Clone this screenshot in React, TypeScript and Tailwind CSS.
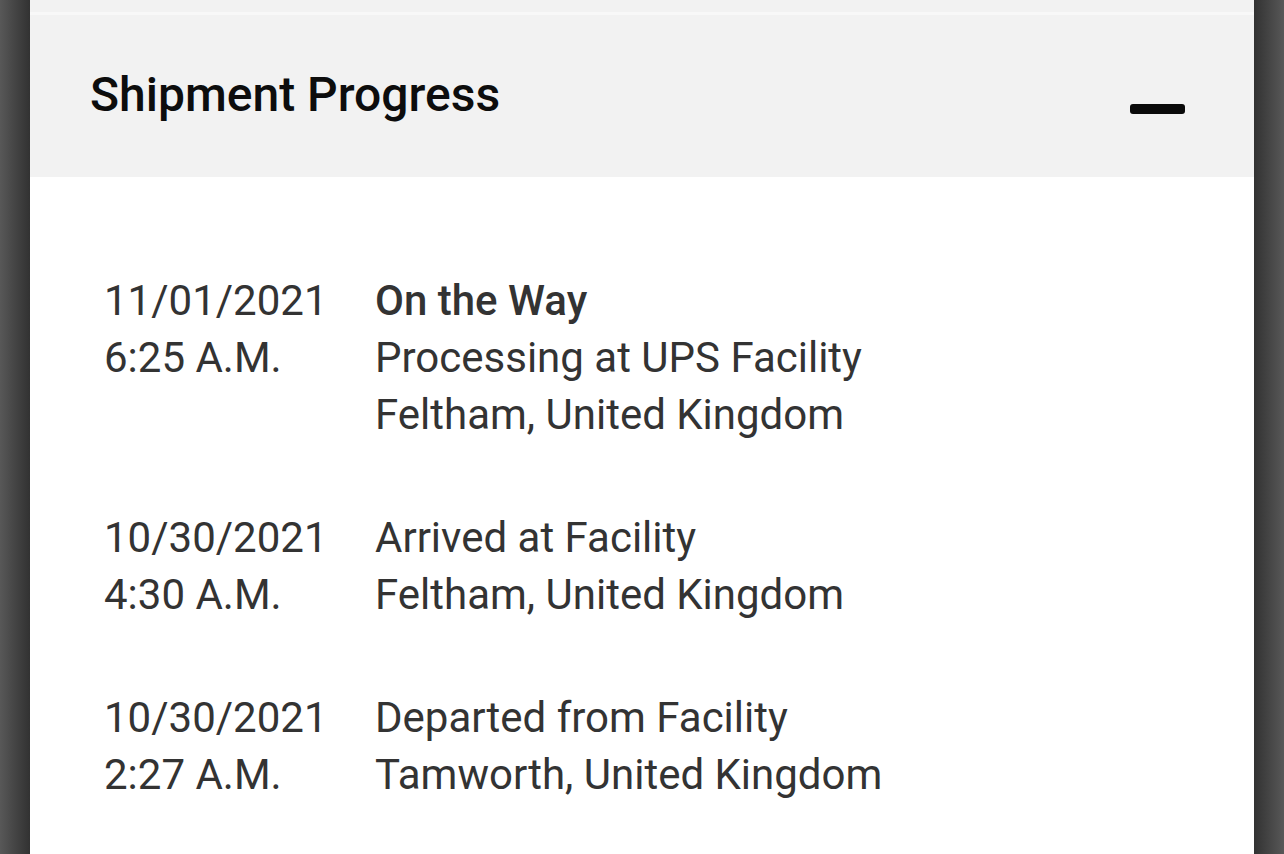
const EVENTS = [
  {
    date: "11/01/2021",
    time: "6:25 A.M.",
    status: "On the Way",
    lines: ["Processing at UPS Facility", "Feltham, United Kingdom"],
  },
  {
    date: "10/30/2021",
    time: "4:30 A.M.",
    lines: ["Arrived at Facility", "Feltham, United Kingdom"],
  },
  {
    date: "10/30/2021",
    time: "2:27 A.M.",
    lines: ["Departed from Facility", "Tamworth, United Kingdom"],
  },
];

const App = () => {
  return (
    <div
      className="flex h-[854px] w-full overflow-hidden bg-white"
      style={{ fontFamily: "Roboto, 'Noto Sans', sans-serif" }}
    >
      {/* left edge shadow */}
      <div className="w-[30px] shrink-0 bg-gradient-to-r from-[#585858] to-[#323232]" />

      <div className="flex min-w-0 flex-1 flex-col bg-white">
        {/* previous section edge */}
        <div className="h-[12px] bg-[#f2f2f2]" />
        <div className="h-[3px] bg-[#f8f8f8]" />

        {/* Header */}
        <div className="flex h-[162px] items-center justify-between bg-[#f2f2f2] pl-[60px] pr-[69px]">
          <h2 className="pb-[3px] text-[48px] font-medium leading-none text-[#0d0d0d]">
            Shipment Progress
          </h2>
          <span className="mt-[26px] block h-[10px] w-[55px] rounded-[3px] bg-[#0a0a0a]" />
        </div>

        {/* Timeline */}
        <div className="flex flex-col gap-[66px] pl-[74px] pt-[95px] text-[42px] leading-[57px] text-[#333333]">
          {EVENTS.map((ev, i) => (
            <div key={i} className="flex">
              <div className="w-[271px] shrink-0">
                <p>{ev.date}</p>
                <p>{ev.time}</p>
              </div>
              <div>
                {ev.status ? <p className="font-medium">{ev.status}</p> : null}
                {ev.lines.map((l) => (
                  <p key={l}>{l}</p>
                ))}
              </div>
            </div>
          ))}
        </div>
      </div>

      {/* right edge shadow */}
      <div className="w-[30px] shrink-0 bg-gradient-to-r from-[#323232] to-[#585858]" />
    </div>
  );
};

export default App;
